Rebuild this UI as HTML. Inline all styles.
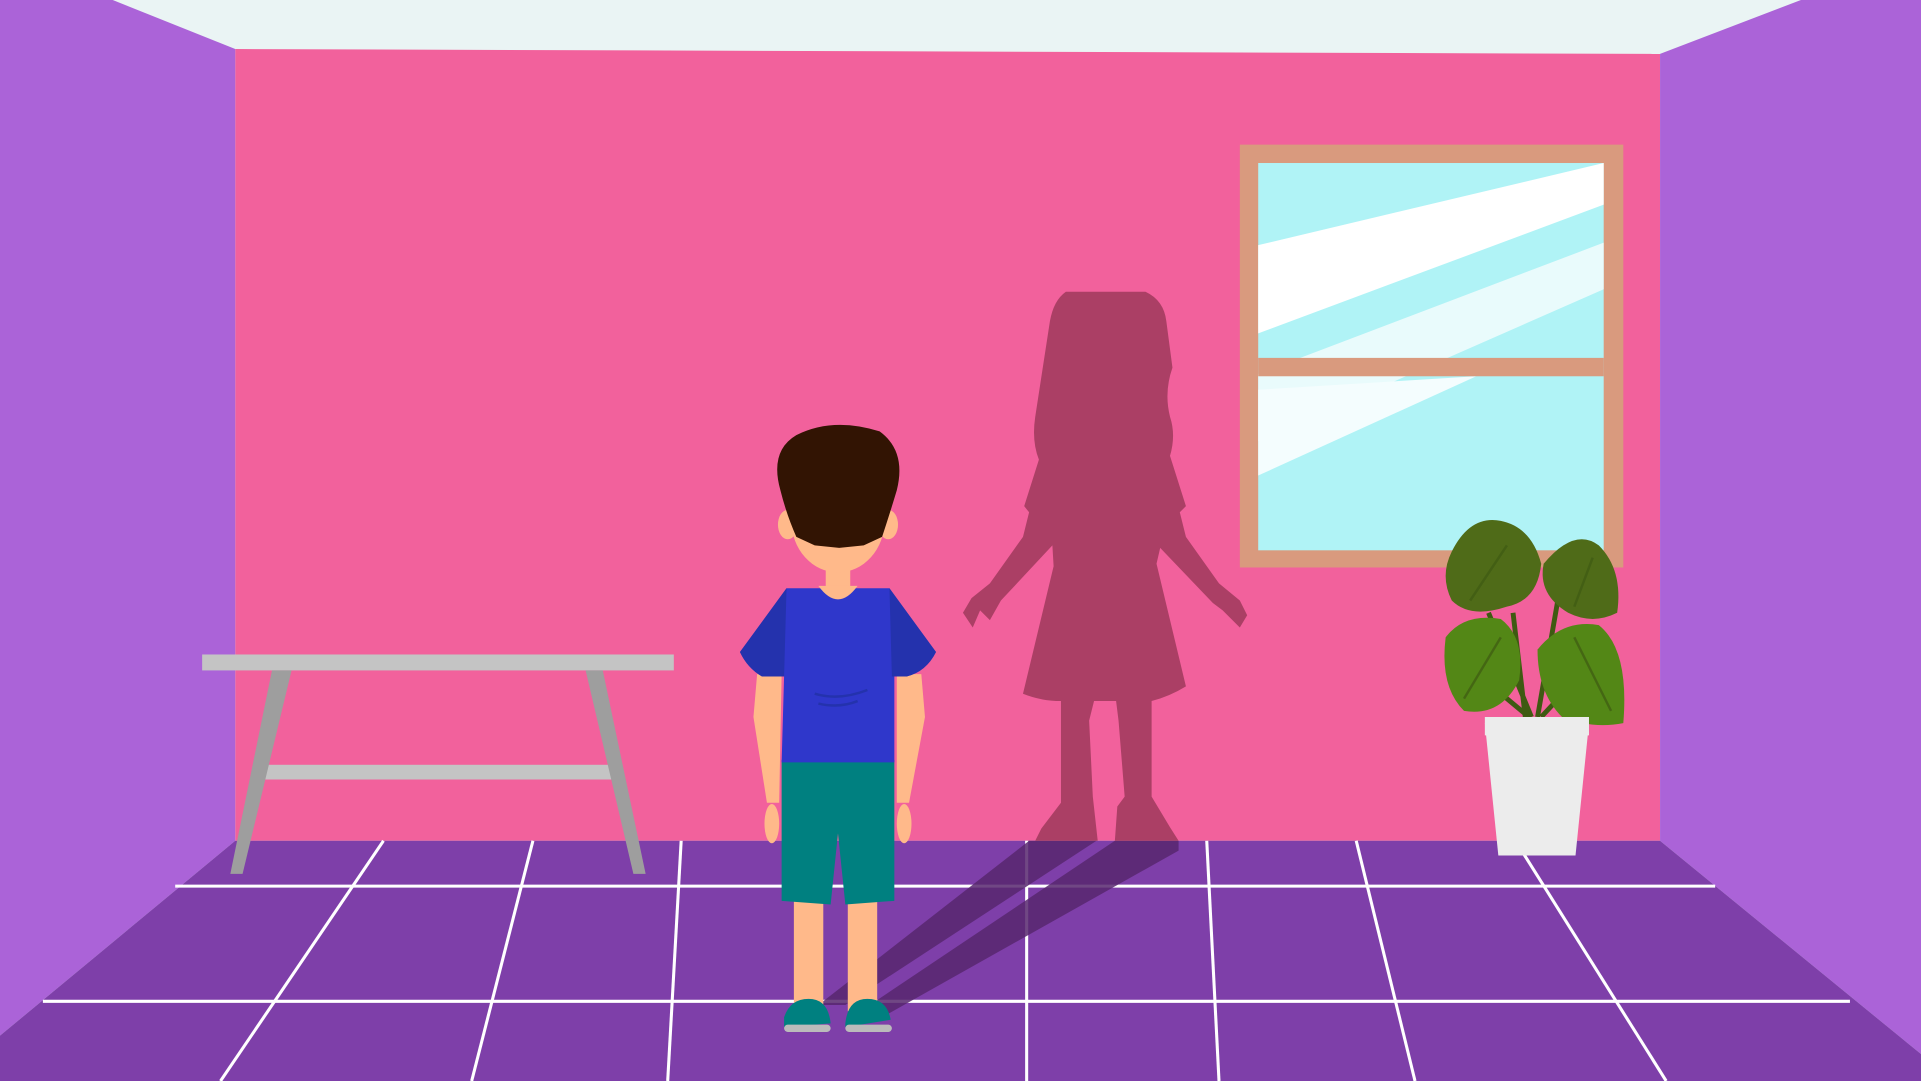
<!DOCTYPE html>
<html><head><meta charset="utf-8"><style>
html,body{margin:0;padding:0;width:1921px;height:1081px;overflow:hidden;background:#fff}
svg{display:block}
</style></head><body>
<svg width="1921" height="1081" viewBox="0 0 1568 882" preserveAspectRatio="none">
<rect width="1568" height="882" fill="#eaf4f4"/>
<polygon points="192,40 1355,44 1355,686 192,686" fill="#f2619c"/>
<polygon points="0,0 92,0 192,40 192,686 0,845" fill="#ab63d8"/>
<polygon points="1470,0 1568,0 1568,860 1355,686 1355,44" fill="#ab63d8"/>
<polygon points="192,686 1355,686 1568,860 1568,882 0,882 0,845" fill="#7e3fa9"/>
<g stroke="#fff" stroke-width="2.5" fill="none">
<line x1="143" y1="723" x2="1400" y2="723"/>
<line x1="35" y1="817" x2="1510" y2="817"/>
<line x1="313" y1="686" x2="180" y2="882"/>
<line x1="435" y1="686" x2="385" y2="882"/>
<line x1="556" y1="686" x2="545" y2="882"/>
<line x1="838" y1="686" x2="838" y2="882"/>
<line x1="985" y1="686" x2="995" y2="882"/>
<line x1="1107" y1="686" x2="1155" y2="882"/>
<line x1="1237" y1="686" x2="1360" y2="882"/>
</g>
<polygon points="840,686 895,686 690,820 668,820" fill="#57276e" opacity="0.85"/>
<polygon points="910,686 962,686 962,694 720,830 698,828" fill="#57276e" opacity="0.85"/>
<!-- window -->
<rect x="1012" y="118" width="313" height="345" fill="#d99a7e"/>
<rect x="1027" y="133" width="282" height="316" fill="#b0f3f6"/>
<polygon points="1027,200 1309,133 1309,167 1027,272" fill="#fff"/>
<polygon points="1027,305 1309,198 1309,236 1027,360" fill="#f0fcfd" opacity="0.9"/>
<polygon points="1027,318 1205,307 1027,388" fill="#f4fdfe"/>
<rect x="1027" y="292" width="282" height="15" fill="#d99a7e"/>
<!-- table -->
<rect x="165" y="534" width="385" height="13" fill="#c4c4c4"/>
<rect x="215" y="624" width="285" height="12" fill="#c4c4c4"/>
<polygon points="222,547 238,547 198,713 188,713" fill="#9e9e9e"/>
<polygon points="478,547 492,547 527,713 517,713" fill="#9e9e9e"/>
<!-- girl shadow -->
<g fill="#ab3f65">
<path d="M870,238 L935,238 Q950,245 952,262 L957,300 Q950,320 955,340 Q960,355 955,372 L968,413 L963,418 L968,438 L995,476 L1012,490 L1018,502 L1012,512 L998,498 L990,492 L947,447 L944,460 L968,560 Q955,568 940,572 L940,650 L955,675 L962,686 L910,686 L912,658 L918,650 L913,588 L911,572 L893,572 L889,588 L892,650 L896,686 L845,686 L850,676 L866,655 L866,572 Q850,572 835,566 L860,462 L859,445 L817,490 L808,506 L800,498 L794,512 L786,500 L793,488 L808,476 L835,438 L840,418 L836,413 L848,375 Q842,360 845,340 L857,262 Q860,245 870,238Z"/>
</g>
<!-- plant -->
<g>
<path d="M1245,585 L1235,500 M1255,585 L1275,470 M1250,585 L1215,500 M1258,585 L1300,540 M1248,585 L1200,545" stroke="#3f5a12" stroke-width="4" fill="none"/>
<path d="M1185,450 Q1200,420 1225,425 Q1250,430 1258,460 Q1255,490 1230,495 Q1200,505 1185,490 Q1175,470 1185,450Z" fill="#4f6b18"/>
<path d="M1260,460 Q1285,430 1305,445 Q1325,465 1320,500 Q1300,510 1280,500 Q1255,485 1260,460Z" fill="#4f6b18"/>
<path d="M1180,520 Q1195,500 1225,505 Q1245,520 1240,555 Q1225,585 1195,580 Q1175,560 1180,520Z" fill="#538716"/>
<path d="M1255,530 Q1275,505 1305,510 Q1330,530 1325,590 Q1300,595 1275,585 Q1255,565 1255,530Z" fill="#538716"/>
<path d="M1200,490 L1230,445 M1285,495 L1300,455 M1195,570 L1225,520 M1285,520 L1315,580" stroke="#3f5a12" stroke-width="2" fill="none" opacity="0.7"/>
<rect x="1212" y="585" width="85" height="15" fill="#ececec"/>
<polygon points="1212,590 1297,590 1286,698 1223,698" fill="#ececec"/>
</g>
<!-- boy -->
<g>
<rect x="648" y="730" width="24" height="95" fill="#ffb98a"/>
<rect x="692" y="730" width="24" height="95" fill="#ffb98a"/>
<path d="M640,830 Q645,815 660,815 Q676,815 678,835 L640,838Z" fill="#008080"/>
<path d="M690,835 Q692,815 708,815 Q724,815 727,832 L690,838Z" fill="#008080"/>
<rect x="640" y="836" width="38" height="6" rx="3" fill="#bbb"/>
<rect x="690" y="836" width="38" height="6" rx="3" fill="#bbb"/>
<polygon points="618,550 638,550 636,655 626,655 615,585" fill="#ffb98a"/>
<polygon points="732,550 752,550 755,585 742,655 732,655" fill="#ffb98a"/>
<ellipse cx="630" cy="672" rx="6" ry="16" fill="#ffb98a"/>
<ellipse cx="738" cy="672" rx="6" ry="16" fill="#ffb98a"/>
<path d="M638,620 L730,620 L730,735 L690,738 L684,680 L678,738 L638,735Z" fill="#008080"/>
<path d="M642,480 L726,480 L764,532 Q756,548 740,552 L730,552 L730,622 L638,622 L640,552 L622,552 Q610,545 604,532Z" fill="#2f37cb"/>
<path d="M642,480 L604,532 Q610,545 622,552 L640,552Z" fill="#2432ad"/>
<path d="M726,480 L764,532 Q756,548 740,552 L728,552Z" fill="#2432ad"/>
<path d="M665,566 Q685,572 708,563 M668,574 Q685,578 700,572" stroke="#2432ad" stroke-width="2" fill="none"/>
<rect x="674" y="455" width="20" height="28" fill="#ffb98a"/>
<path d="M668,478 Q684,500 700,478Z" fill="#ffb98a"/>
<ellipse cx="684" cy="425" rx="38" ry="42" fill="#ffb98a"/>
<ellipse cx="643" cy="428" rx="8" ry="12" fill="#ffb98a"/>
<ellipse cx="725" cy="428" rx="8" ry="12" fill="#ffb98a"/>
<path d="M650,355 Q680,340 718,352 Q740,368 732,400 Q726,420 720,438 L705,445 L685,447 L665,445 L650,438 Q642,420 637,400 Q628,368 650,355Z" fill="#321403"/>
</g>
</svg>
</body></html>
